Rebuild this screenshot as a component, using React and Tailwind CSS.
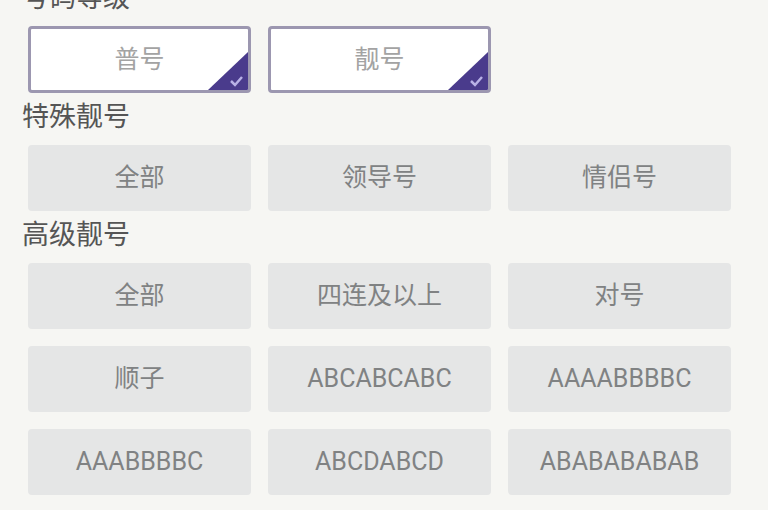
import React from 'react'

const font = { fontFamily: 'Roboto, "Noto Sans CJK SC", sans-serif' }

const levels = [
  { id: 1, label: '普号', selected: true },
  { id: 2, label: '靓号', selected: true },
]
const special = ['全部', '领导号', '情侣号']
const advanced = ['全部', '四连及以上', '对号', '顺子', 'ABCABCABC', 'AAAABBBBC', 'AAABBBBC', 'ABCDABCD', 'ABABABABAB']

const Title = ({ children }) => (
  <div className="pt-[7px] pb-[11px] text-[27px] leading-[34px] text-[#555555]">{children}</div>
)

const Corner = () => (
  <svg className="absolute right-0 bottom-0" width="40" height="38" viewBox="0 0 40 38">
    <polygon points="40,0 40,38 0,38" fill="#4a3b8c" />
    <polyline points="23,29 27,33 34,25" fill="none" stroke="#b8b0e6" strokeWidth="2.5" />
  </svg>
)

const Option = ({ label }) => (
  <div className="h-[66px] flex items-center justify-center bg-[#e5e6e6] rounded-[4px] text-[25px] text-[#808283]">
    {label}
  </div>
)

const App = () => {
  return (
    <div className="w-[768px] h-[510px] overflow-hidden bg-[#f6f6f3]" style={font}>
      <div className="-mt-[26px] pl-[22px] pr-[37px]">
        <Title>号码等级</Title>
        <div className="grid grid-cols-3 gap-[17px] pl-[6px]">
          {levels.map((item) => (
            <div
              key={item.id}
              className="relative h-[67px] flex items-center justify-center bg-white border-[3px] border-[#9c97b0] rounded-[4px] overflow-hidden text-[25px] text-[#a3a3a3]">
              {item.label}
              {item.selected && <Corner />}
            </div>
          ))}
        </div>

        <Title>特殊靓号</Title>
        <div className="grid grid-cols-3 gap-[17px] pl-[6px]">
          {special.map((label, i) => (
            <Option key={i} label={label} />
          ))}
        </div>

        <Title>高级靓号</Title>
        <div className="grid grid-cols-3 gap-[17px] pl-[6px]">
          {advanced.map((label, i) => (
            <Option key={i} label={label} />
          ))}
        </div>
      </div>
    </div>
  )
}
export default App
